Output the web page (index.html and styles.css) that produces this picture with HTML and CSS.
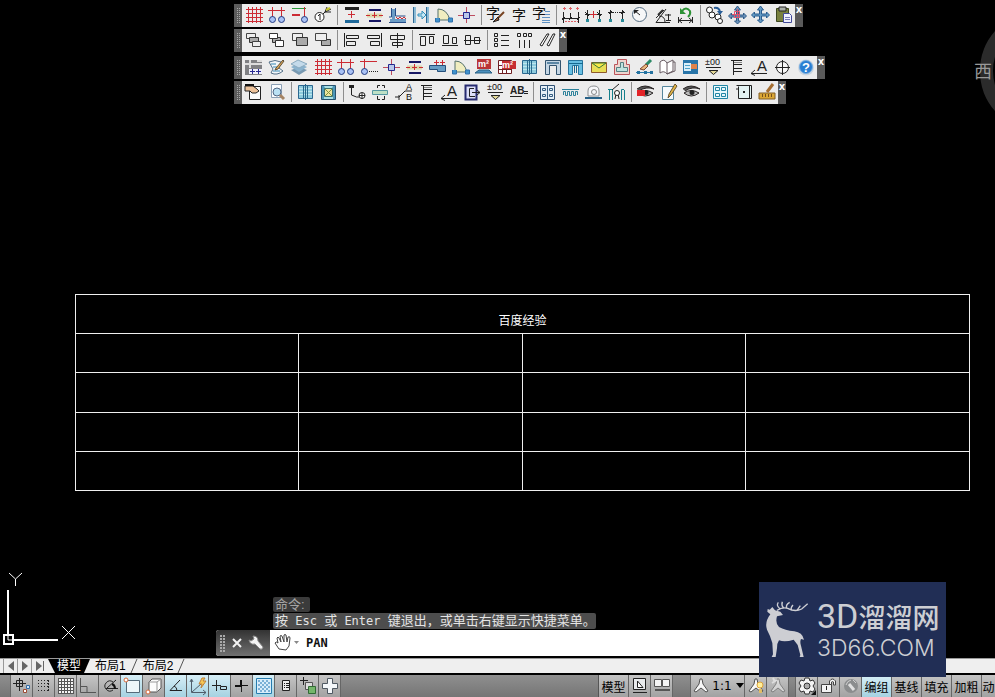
FILE: index.html
```html
<!DOCTYPE html>
<html lang="zh-CN">
<head>
<meta charset="utf-8">
<title>CAD</title>
<link rel="stylesheet" href="styles.css">
</head>
<body>
<svg class="sprite" aria-hidden="true">
<!-- drawing toolbar -->
<symbol id="grid" viewBox="0 0 19 19"><path d="M4.500 1v16M8.500 1v16M12.500 1v16M16.500 1v16M2 3.500h17M2 7.500h17M2 11.500h17M2 15.500h17" stroke="#cc2b34"/></symbol>
<symbol id="axes" viewBox="0 0 19 19"><path d="M5.500 1v10M14.500 1v10M1 4.500h17" class="red"/><circle cx="5.500" cy="13.500" r="3" class="ball"/><circle cx="14.500" cy="13.500" r="3" class="ball"/></symbol>
<symbol id="axis" viewBox="0 0 19 19"><path d="M2 2.500h14" stroke="#2a9a3a"/><path d="M14.500 1v10" class="red"/><path d="M2 9h8" class="red" stroke-width="2"/><circle cx="14.500" cy="13.500" r="3" class="ball"/></symbol>
<symbol id="number" viewBox="0 0 19 19"><path d="M9 9l3-3h6M12 6l2-5M12 6l6-3" class="ink"/><path d="M13 4l4-2" stroke="#c6c52c" stroke-width="2"/><circle cx="6.500" cy="11" r="4.500" fill="#fff" class="ink"/><path d="M5 10l2-2v6" class="ink"/></symbol>
<symbol id="level" viewBox="0 0 19 19"><path d="M3 2.500h14" class="ink" stroke-width="3"/><path d="M9.500 5v7M6 8.500h7" class="red"/><path d="M3 15.500h14" stroke="#1e699b" stroke-width="3"/></symbol>
<symbol id="offset" viewBox="0 0 19 19"><path d="M4 4h12M4 15h12" stroke="#171764" stroke-width="2"/><path d="M2 9.500h15" stroke="#ddd8aa" stroke-width="4"/><path d="M1 9.500h4M7 9.500h5M14 9.500h4M9.500 6v6" class="red"/></symbol>
<symbol id="wall" viewBox="0 0 19 19"><path d="M2 14.500h16M5.500 3v10" stroke="#6a9bc4" stroke-width="3"/><path d="M3.500 2v9H1M7.500 2v8h10M1 16.500h17" stroke="#254c88"/><path d="M8 11l2 2 2-2 2 2 2-2 2 2" class="red"/></symbol>
<symbol id="slide" viewBox="0 0 19 19"><path d="M3.500 1v16M16.500 1v16" stroke="#8cbbd5" stroke-width="3"/><path d="M2.500 1v16M15.500 1v16" stroke="#306a95"/><path d="M7 8h4V5l4 4-4 4v-3H7z" fill="#cae9f4" stroke="#3090bc"/></symbol>
<symbol id="arcdoor" viewBox="0 0 19 19"><path d="M4 14V3Q13 3 16 14z" fill="#f0edc0" stroke="#54716c"/><path d="M1.500 12v4h4v-4M14.500 12v4h4v-4z" fill="#4193cd" stroke="#3171ac"/></symbol>
<symbol id="cross" viewBox="0 0 19 19"><path d="M9.500 1v16M1 9.500h17" stroke="#bd4d60"/><path d="M6.500 6.500h6v6h-6z" fill="#bac9ea" stroke="#23278f" stroke-width="1"/></symbol>
<symbol id="textbrush" viewBox="0 0 19 19"><text x="0" y="12" class="zi">字</text><path d="M18 6l-6 6" stroke="#774322" stroke-width="2"/><path d="M12 11l-5 5 6-2z" fill="#96532d" class="ink"/></symbol>
<symbol id="text" viewBox="0 0 19 19"><text x="3" y="14" class="zi">字</text></symbol>
<symbol id="textlines" viewBox="0 0 19 19"><text x="0" y="12" class="zi">字</text><path d="M13 5.500h5M13 8.500h5M10 11.500h8M10 14.500h8M10 16.500h8" stroke="#5e91c3"/></symbol>
<symbol id="dim1" viewBox="0 0 19 19"><path d="M2.500 6v11M9.500 7v6M17.500 6v11M1 12.500h17M1 14l3-3M8 14l3-3M16 14l3-3" class="ink"/><path d="M3.500 1v3M9.500 1v3M16.500 1v3M8 2.500h3M15 2.500h3M2 2.500h3" stroke="#df6267"/><path d="M4 15.500h13" stroke="#df6267" stroke-dasharray="2 1"/></symbol>
<symbol id="dim2" viewBox="0 0 19 19"><path d="M3.500 4v9M15.500 4v9M1 8.500h17M1 6l4 4M13 6l4 4" class="ink"/><path d="M9.500 5v7M6 8.500h7" class="red"/><path d="M2 13h3v3H2zM14 13h3v3h-3z" fill="#298c9a"/></symbol>
<symbol id="dim3" viewBox="0 0 19 19"><path d="M3.500 4v9M15.500 4v9M1 6.500h5M13 6.500h5M2 8l3-3M14 8l3-3" class="ink"/><path d="M6 6.500h7" class="ink" stroke-dasharray="1 1"/><path d="M2 13h3v3H2zM14 13h3v3h-3z" fill="#298c9a"/></symbol>
<symbol id="radius" viewBox="0 0 19 19"><circle cx="9.500" cy="8.500" r="7" fill="#f6f7f8" stroke="#536c82"/><path d="M10 9L5 5" class="ink"/><path d="M4 4h5L4 8z" fill="#222"/></symbol>
<symbol id="angle" viewBox="0 0 19 19"><path d="M17 16.500H3L13 3M3 12l8-8M6 10q6 0 6 6M15.500 8v6M12 9h6M13 14.500h5" class="ink"/><path d="M5 9l5-5" stroke="#333" stroke-width="2"/></symbol>
<symbol id="update" viewBox="0 0 19 19"><path d="M2.500 11v6M16.500 11v6M2 14.500h15M6 12l-3 2.500 3 2.500M13 12l3 2.500-3 2.500" class="ink"/><path d="M6 5q4-5 8 0 1 3-2 6" stroke="#2c9235" stroke-width="2"/><path d="M4 2v6h6z" fill="#2c9235"/></symbol>
<symbol id="replace" viewBox="0 0 19 19"><circle cx="4.500" cy="4" r="3" fill="#fff" class="ink"/><circle cx="7" cy="9" r="3" fill="#fff" class="ink"/><circle cx="13" cy="11" r="3" fill="#fff" class="ink"/><circle cx="15" cy="15" r="2.500" fill="#fff" class="ink"/><path d="M9 2q5-1 6 4" stroke="#275c96" stroke-width="2"/><path d="M12 5h6l-3 4z" fill="#275c96"/></symbol>
<symbol id="movered" viewBox="0 0 19 19"><path d="M9.500 0l3 4h-2v5h5V7l3 3-3 3v-2h-5v4h2l-3 3-3-3h2v-4h-5v2l-3-3 3-3v2h5V4h-2z" fill="#6a91b9" stroke="#315c88"/><path d="M6.500 5.500h5v6h-5zM4 8.500h8M9.500 3v9" stroke="#e1526d"/></symbol>
<symbol id="move" viewBox="0 0 19 19"><path d="M9.500 0l3 4h-2v4h5V6l3 3-3 3v-2h-5v4h2l-3 3-3-3h2v-4h-5v2l-3-3 3-3v2h5V4h-2z" fill="#659bc4" stroke="#295c8f"/></symbol>
<symbol id="paste" viewBox="0 0 19 19"><path d="M2.500 2.500h12v13h-12z" fill="#78803e" stroke="#3c461f"/><path d="M5 1h7v4H5z" fill="#a9aea6" class="ink"/><path d="M9.500 7.500h6l2 2v7h-8z" fill="#eff1ff" stroke="#414998"/><path d="M11 11.500h5M11 13.500h5" stroke="#777bb7"/></symbol>
<!-- order and align -->
<symbol id="ord1" viewBox="0 0 19 19"><path d="M2.500 2.500h9v5h-9z" class="sheet"/><path d="M5.500 6.500h9v5h-9z" fill="#aaa" stroke="#333"/><path d="M8.500 10.500h8v5h-8z" class="sheet"/></symbol>
<symbol id="ord2" viewBox="0 0 19 19"><path d="M5.500 6.500h8v5h-8z" fill="#aaa" stroke="#333"/><path d="M2.500 2.500h8v5h-8zM8.500 9.500h8v6h-8z" fill="#fff" stroke="#333"/></symbol>
<symbol id="ord3" viewBox="0 0 19 19"><path d="M2.500 2.500h10v7h-10z" class="sheet"/><path d="M6.500 6.500h11v8h-11z" fill="#aaa" stroke="#333"/></symbol>
<symbol id="ord4" viewBox="0 0 19 19"><path d="M8.500 8.500h9v6h-9z" fill="#aaa" stroke="#333"/><path d="M2.500 2.500h11v7h-11z" class="sheet"/></symbol>
<symbol id="left" viewBox="0 0 19 19"><path d="M2.500 2v14M4.500 4.500h12v3h-12zM4.500 10.500h9v4h-9z" class="box"/></symbol>
<symbol id="right" viewBox="0 0 19 19"><path d="M16.500 2v14M2.500 4.500h12v3h-12zM5.500 10.500h9v4h-9z" class="box"/></symbol>
<symbol id="middle" viewBox="0 0 19 19"><path d="M9.500 2v15M2.500 4.500h14v4h-14zM4.500 11.500h10v3h-10z" class="box"/></symbol>
<symbol id="top" viewBox="0 0 19 19"><path d="M2 3.500h16M3.500 5.500h5v9h-5zM12.500 5.500h4v7h-4z" class="box"/></symbol>
<symbol id="bottom" viewBox="0 0 19 19"><path d="M2 14.500h16M3.500 4.500h5v8h-5zM12.500 6.500h4v6h-4z" class="box"/></symbol>
<symbol id="centre" viewBox="0 0 19 19"><path d="M1 9.500h17M2.500 4.500h5v9h-5zM11.500 6.500h5v6h-5z" class="box"/></symbol>
<symbol id="rows" viewBox="0 0 19 19"><path d="M2.500 2.500h3v3h-3zM2.500 7.500h3v3h-3zM2.500 12.500h3v3h-3zM9 4.500h8M9 9.500h8M9 14.500h8" class="box"/></symbol>
<symbol id="cols" viewBox="0 0 19 19"><path d="M2.500 2.500h3v3h-3zM8.500 2.500h3v3h-3zM13.500 2.500h3v3h-3zM4.500 9v8M9.500 9v8M14.500 9v8" class="box"/></symbol>
<symbol id="slants" viewBox="0 0 19 19"><path d="M2 14l7-11h2L4 15zM9 14l6-11h2l-6 12z" fill="#fff" stroke="#222"/></symbol>
<!-- architecture -->
<symbol id="settings" viewBox="0 0 19 19"><path d="M1 2h17v15H1z" fill="#808184"/><path d="M1 6h17M6 2v8M13 3h5" stroke="#ddd" stroke-width="2"/><path d="M5 11h13v5H5z" fill="#eff0fa"/><path d="M6 13.500h5M8.500 11v5M12 13.500h5M14.500 11v5" stroke="#282a91"/></symbol>
<symbol id="note" viewBox="0 0 19 19"><path d="M2 4q6-3 12 0l-2 6 4 3q-6 5-12 2l2-4z" fill="#f2f6f8" stroke="#536f88"/><path d="M4 6h5M6 9h4M6 13h7" stroke="#3488b4"/><path d="M16 2l-7 8-1 2 3-1 6-8z" fill="#e0a957" stroke="#615139"/></symbol>
<symbol id="layers" viewBox="0 0 19 19"><path d="M1 12l8-3 8 3-8 5z" fill="#7899b1"/><path d="M1 9l8-4 8 4-8 5z" fill="#8bb3ce"/><path d="M1 6l7-4 9 4-8 4z" fill="#c4daea" stroke="#8aaabf"/></symbol>
<symbol id="axisdots" viewBox="0 0 19 19"><path d="M5.500 1v10M1 3.500h17" class="red"/><circle cx="5.500" cy="13.500" r="3" class="ball"/><path d="M10 13.500h9" class="ink" stroke-dasharray="1 1"/></symbol>
<symbol id="beam" viewBox="0 0 19 19"><path d="M1.500 7.500h16v6h-8v-2h-8z" fill="#689dc4" stroke="#254f7b"/><path d="M8.500 2v5M14.500 2v5M6 4.500h5M12 4.500h5" stroke="#cc2b34"/></symbol>
<symbol id="area" viewBox="0 0 19 19"><path d="M3 1h14v10H3z" fill="#b93336"/><text x="4" y="9" class="m2">m²</text><path d="M1 15l4-3h10l3 3z" fill="#4c8fbc" stroke="#286184"/></symbol>
<symbol id="areagrid" viewBox="0 0 19 19"><path d="M1.500 2.500h13v13h-13zM1 7.500h13M1 11.500h13M5.500 2v14M9.500 2v14" fill="#fff" stroke="#702023"/><path d="M5 3h14v8H5z" fill="#c62e32"/><text x="5" y="10" class="m2">m²</text></symbol>
<symbol id="window" viewBox="0 0 19 19"><path d="M2.500 2.500h14v13h-14z" fill="#8ecbdd" stroke="#2b6890"/><path d="M3 5.500h13M3 8.500h13M3 11.500h13" stroke="#bde5ed"/><path d="M9.500 1v16M7.500 3v13M11.500 3v13" stroke="#28678b"/></symbol>
<symbol id="doorway" viewBox="0 0 19 19"><path d="M2.500 2.500h15v14h-4v-9h-7v9h-4z" fill="#c5d6e4" stroke="#33546f"/><path d="M4 5h12" stroke="#5b86a4" stroke-width="2"/></symbol>
<symbol id="gate" viewBox="0 0 19 19"><path d="M2.500 2.500h14v14h-4v-9h-6v9h-4z" fill="#68bfe2" stroke="#28759d"/><path d="M8.500 7v8M10.500 7v8M3 5.500h14" stroke="#176990"/></symbol>
<symbol id="mail" viewBox="0 0 19 19"><path d="M2.500 4.500h15v10h-15z" fill="#e8dd56" stroke="#8e5a2c"/><path d="M3 5l7 5 7-5z" fill="#f8e947" stroke="#38783b"/></symbol>
<symbol id="stamp" viewBox="0 0 19 19"><path d="M5.500 1.500h9v5h3v10h-15v-10h3z" fill="#eed5cf" stroke="#bb545a"/><path d="M8.500 4.500h3v5h4v4h-11v-4h4z" fill="#bfe3df" stroke="#577f82"/></symbol>
<symbol id="erase" viewBox="0 0 19 19"><path d="M1 14.500h17" stroke="#277cad"/><path d="M2 13h3v3H2zM9 13h3v3H9zM15 13h3v3h-3z" fill="#2573a0"/><path d="M16 2l-5 5" stroke="#2b8a66" stroke-width="3"/><path d="M11 6l-6 5 4 1 4-4z" fill="#e7b57a" stroke="#804531"/></symbol>
<symbol id="book" viewBox="0 0 19 19"><path d="M2 4q4-4 7 1v11q-3-4-7-1zM9 5l6-3v11l-6 3M15 4h2v9l-8 3" fill="#fff" stroke="#665a61"/></symbol>
<symbol id="panel" viewBox="0 0 19 19"><path d="M2 2h15v14H2z" fill="#2875a9"/><path d="M3 5h7v8H3z" fill="#d9eef8"/><path d="M4 7.500h5M4 10.500h5" stroke="#4ca1c9"/><path d="M10 6h6v5h-6z" fill="#e0834b"/></symbol>
<symbol id="elevation" viewBox="0 0 19 19"><text x="1" y="7" class="tiny">±00</text><path d="M2 9.500h15" class="ink"/><path d="M5 12.500h9l-4.500 4z" fill="#e4da9a" class="ink"/></symbol>
<symbol id="ladder" viewBox="0 0 19 19"><path d="M4 2.500h11M6.500 2v15M7 6.500h8M7 10.500h8M7 13.500h8" class="ink"/><path d="M7 4.500h8" stroke="#888"/></symbol>
<symbol id="letter" viewBox="0 0 19 19"><text x="7" y="13" class="bigA">A</text><path d="M17 15.500H1M5 12l-4 3.500 4 2" class="ink"/></symbol>
<symbol id="target" viewBox="0 0 19 19"><circle cx="9.500" cy="9.500" r="6" fill="#f7f7f7" class="ink"/><path d="M9.500 2v15M2 9.500h15" class="ink"/></symbol>
<symbol id="help" viewBox="0 0 19 19"><circle cx="10" cy="9.500" r="8" fill="#cbd5df"/><circle cx="10" cy="9" r="6.500" fill="#297ed2" stroke="#75ade2"/><text x="6" y="14" class="question">?</text></symbol>
<!-- annotation -->
<symbol id="hand" viewBox="0 0 19 19"><path d="M5.500 3.500h11v13h-11z" fill="#fafafa" class="ink"/><path d="M1 3h8l4 3 2 2-3 2H8L6 8H1z" fill="#edc29a" class="ink"/><path d="M1 2h9" stroke="#111" stroke-width="2"/></symbol>
<symbol id="preview" viewBox="0 0 19 19"><path d="M4.500 1.500h10v13h-10z" fill="#f9fcff" stroke="#8ca0b5"/><circle cx="10" cy="9" r="4" fill="#bae1f4" stroke="#526784"/><path d="M13 12l4 4" stroke="#a68463" stroke-width="3"/></symbol>
<symbol id="picture" viewBox="0 0 19 19"><path d="M2.500 2.500h14v14h-14z" fill="#4d97b8" stroke="#27516d"/><path d="M5 3h9l-2 4H7zM5 16v-4h9v4z" fill="#a8e0e5"/><path d="M5.500 5.500h8v8h-8z" fill="#eee6a0" stroke="#39716d"/><path d="M6 6l7 7M13 6l-7 7" stroke="#839640"/></symbol>
<symbol id="leader" viewBox="0 0 19 19"><path d="M3.500 3v9l5 2h3" class="ink"/><path d="M1 2h5v3H1z" fill="#222"/><circle cx="14" cy="12.500" r="3" fill="#fff" class="ink"/><path d="M11 12.500h6M14 10v6" class="ink"/></symbol>
<symbol id="section" viewBox="0 0 19 19"><path d="M1.500 7.500h15v4h-15z" fill="#bde0c5" stroke="#5597a1"/><path d="M6.500 5V2.500H9M11 2.500h2.500V5M6.500 13v3.500H9M11 16.500h2.500V13" class="ink"/></symbol>
<symbol id="ab" viewBox="0 0 19 19"><path d="M1 14h4l6-6h7M5 12v5" class="ink"/><text x="12" y="7" class="tiny">A</text><text x="12" y="17" class="tiny">B</text></symbol>
<symbol id="page" viewBox="0 0 19 19"><path d="M2.500 2.500h11v14h-11z" fill="#dddff8" stroke="#272b6f" stroke-width="2"/><path d="M11 5.500H6.500v8H12M9 9.500h8M14 7l3 2.500-3 2.500" class="ink"/></symbol>
<symbol id="abtext" viewBox="0 0 19 19"><text x="1" y="11" class="abt">AB</text><path d="M1 13.500h12M15 10.500h4M15 8.500h4" class="ink"/></symbol>
<symbol id="facade" viewBox="0 0 19 19"><path d="M2.500 2.500h14v14h-14z" fill="#e6f0f7" stroke="#2f5072"/><path d="M4.500 5.500h3v2h-3zM11.500 5.500h3v2h-3zM4.500 11.500h3v2h-3zM11.500 11.500h3v2h-3zM9.500 3v13" stroke="#355e82"/></symbol>
<symbol id="wave" viewBox="0 0 19 19"><path d="M1 6.500h17M2.500 12V8.500h2v4h2v-4h2v4h2v-4h2v4h2v-4h2V12" stroke="#2a8099"/></symbol>
<symbol id="arch" viewBox="0 0 19 19"><path d="M4 13V8q0-5 6-5 5 0 5 5v5z" fill="#f7f8fa" stroke="#8c8f92"/><circle cx="10" cy="9" r="2.500" stroke="#888"/><path d="M1 15h17" stroke="#276187" stroke-width="2"/></symbol>
<symbol id="house" viewBox="0 0 19 19"><path d="M1 6.500h4.500V17M17 6.500h-2.500V17M2.500 7v10M17.500 7v10" stroke="#16808c"/><path d="M5 7l7-6M8 16l1-5M12 16l-1-5" class="ink"/><circle cx="10" cy="10" r="2.500" fill="#fff" class="ink"/></symbol>
<symbol id="eye" viewBox="0 0 19 19"><path d="M1 6q8-6 17 0-8-3-15 2" fill="#555" stroke="#272323"/><path d="M2 10q7-5 15 0-8 6-15 0" fill="#bbb" stroke="#272323"/><circle cx="10" cy="9.500" r="2.500" fill="#222"/></symbol>
<symbol id="redeye" viewBox="0 0 19 19"><use href="#eye"/><path d="M1 7h8v6H1z" fill="#e32428"/></symbol>
<symbol id="edit" viewBox="0 0 19 19"><path d="M3.500 3.500h11v13h-11z" fill="#f5fafc" stroke="#55869c"/><path d="M16 1l-6 10-1 4 3-3 6-9z" fill="#e1b748" stroke="#685230"/></symbol>
<symbol id="tiles" viewBox="0 0 19 19"><path d="M2.500 2.500h14v13h-14z" fill="#e9f8fc" stroke="#2386a4"/><path d="M4.500 4.500h4v3h-4zM10.500 4.500h4v3h-4zM4.500 10.500h4v3h-4zM10.500 10.500h4v3h-4z" stroke="#2386a4"/></symbol>
<symbol id="frame" viewBox="0 0 19 19"><path d="M2.500 2.500h15v13h-13v-12M2 6h2M15.500 3v13" fill="#e4f3f3" class="ink"/><path d="M9 8h2v2H9z" fill="#222"/></symbol>
<symbol id="measure" viewBox="0 0 19 19"><path d="M2 10h16v6H2z" fill="#dba735" stroke="#825e26"/><path d="M5.500 11v3M8.500 11v3M11.500 11v3M14.500 11v3" stroke="#76501c"/><path d="M16 1l-6 8" stroke="#a56e32" stroke-width="3"/></symbol>
<!-- status bar -->
<symbol id="s-infer" viewBox="0 0 20 20"><path d="M7.500 2v13M1 7.500h13M4.500 4.500h6v6h-6z" class="dk"/><path d="M11.500 13.500h3v3h-3z" fill="#fff" stroke="#9e4a32"/><path d="M14.500 9.500h3v3h-3z" fill="#d5e5f8" stroke="#336da5"/></symbol>
<symbol id="s-snap" viewBox="0 0 20 20"><path d="M4 4.500h10M4 7.500h10M4 10.500h10M4 14.500h10" class="dk" stroke-dasharray="1 2"/><path d="M14.500 4v11" class="dk" stroke-dasharray="2 1"/></symbol>
<symbol id="s-grid" viewBox="0 0 20 20"><path d="M2 2h16v16H2z" fill="#f5f5f5"/><path d="M2.500 2v16M5.500 2v16M8.500 2v16M11.500 2v16M14.500 2v16M17.500 2v16M2 2.500h16M2 5.500h16M2 8.500h16M2 11.500h16M2 14.500h16M2 17.500h16" stroke="#555"/></symbol>
<symbol id="s-ortho" viewBox="0 0 20 20"><path d="M2.500 2v14.500H18M3 10.500h6v6" stroke="#555"/></symbol>
<symbol id="s-polar" viewBox="0 0 20 20"><path d="M13 6a5 5 0 1 0 0 8M6 12.500h12M7 12l9-8" class="dk"/><path d="M12 8q3 1 3 5" stroke="#111" stroke-width="2"/></symbol>
<symbol id="s-osnap" viewBox="0 0 20 20"><path d="M4.500 4.500h13v12h-13z" fill="#edf7fa" stroke="#546b7a"/><circle cx="4" cy="4" r="2" class="orange"/></symbol>
<symbol id="s-cube" viewBox="0 0 20 20"><path d="M5 6l3-3h9v9l-4 4H5z" fill="#fcfcfc" stroke="#555"/><path d="M5 6h8v10M13 6l4-3" stroke="#999"/><circle cx="4" cy="16" r="2" class="orange"/></symbol>
<symbol id="s-track" viewBox="0 0 20 20"><path d="M14 4L4 14.500h12M8 10q3 1 3 5" class="dk"/></symbol>
<symbol id="s-ucs" viewBox="0 0 20 20"><path d="M3.500 4v12.500H18M4 16l9-8M2 6l1.500-3L5 6M15 14l3 2.500-3 2.500" stroke="#4f5d6a"/><path d="M14 2l-3 6h3l-1 4 5-7h-3l2-3z" fill="#f5c756" stroke="#c08139"/></symbol>
<symbol id="s-dyn" viewBox="0 0 20 20"><path d="M6.500 4v11M2 9.500h9M10.500 10.500h6v3h-6z" class="dk"/></symbol>
<symbol id="s-plus" viewBox="0 0 20 20"><path d="M9.500 4v12" class="dk"/><path d="M3 9.500h13" stroke="#111" stroke-width="1"/><path d="M9 4v6M3 10h7" stroke="#111" stroke-width="2"/></symbol>
<symbol id="s-trans" viewBox="0 0 20 20"><path d="M2.500 2.500h15v15h-15z" fill="#d8edfa" stroke="#267caf"/><path d="M4 5h12M4 9h12M4 13h12" stroke="#7bb0d6" stroke-width="2" stroke-dasharray="2 2"/><path d="M6 7h10M6 11h10M6 15h10" stroke="#7bb0d6" stroke-width="2" stroke-dasharray="2 2"/></symbol>
<symbol id="s-list" viewBox="0 0 20 20"><path d="M6.500 4.500h7v10h-7z" fill="#eee" class="dk"/><path d="M8 7.500h1M8 9.500h1M8 11.500h1M10 7.500h3M10 9.500h3M10 11.500h3" class="dk"/></symbol>
<symbol id="s-select" viewBox="0 0 20 20"><path d="M5.500 1v8M2 4.500h8" class="dk"/><path d="M7.500 6.500h7v7h-7z" fill="#ddd" stroke="#555"/><path d="M10.500 10.500h7v7h-7z" fill="#75b66b" stroke="#326b35"/></symbol>
<symbol id="s-add" viewBox="0 0 20 20"><path d="M7.500 2.500h5v5h5v5h-5v5h-5v-5h-5v-5h5z" fill="#f3f7fa" stroke="#4e5963"/></symbol>
<symbol id="s-model" viewBox="0 0 20 20"><path d="M3.500 2.500h12v11h-12zM3 16.500h14" fill="#e8eaec" class="dk"/><path d="M7.500 5v6.500H13z" fill="#fff" class="dk"/></symbol>
<symbol id="s-pages" viewBox="0 0 20 20"><path d="M2.500 3.500h7v7h-7zM10.500 3.500h7v7h-7z" fill="#f4f4f4" stroke="#555"/><path d="M3 14h15" stroke="#555" stroke-width="2"/></symbol>
<symbol id="s-annot" viewBox="0 0 20 20"><path d="M9 3h2l1 5 5 7-2 1-5-4-5 4-2-1 5-7z" fill="#f7f7f7" stroke="#525252"/></symbol>
<symbol id="s-annotsun" viewBox="0 0 20 20"><use href="#s-annot"/><circle cx="14" cy="9" r="3" fill="#fff09b" stroke="#dda33b"/><path d="M13 13h3v4h-3z" fill="#e3bd64"/></symbol>
<symbol id="s-annotflash" viewBox="0 0 20 20"><g opacity=".5"><use href="#s-annot"/><path d="M5 2l2 4M9 4L4 7" stroke="#fff" stroke-width="2"/></g></symbol>
<symbol id="s-gear" viewBox="0 0 20 20"><path d="M8 2h4l1 3 3-1 2 3-2 3 2 3-2 3-3-1-1 3H8l-1-3-3 1-2-3 2-3-2-3 2-3 3 1z" fill="#f4f4f4" stroke="#343434"/><circle cx="10" cy="10" r="3" fill="#aaa" stroke="#333"/><path d="M19 14v5h-5z" fill="#111"/></symbol>
<symbol id="s-lock" viewBox="0 0 20 20"><path d="M10.500 9V5q3-4 6 0v4h-2V6q-1-1-2 0v3z" fill="#f3f3f3" stroke="#444"/><path d="M2.500 8.500h10v8h-10z" fill="#f3f3f3" stroke="#444"/><path d="M7.500 10v4" class="dk"/></symbol>
<symbol id="s-gauge" viewBox="0 0 20 20"><circle cx="10" cy="10" r="7" fill="#8b8d8e"/><path d="M8 8l5 6" stroke="#e1e1e1" stroke-width="3"/><path d="M5 9q1-4 5-5M12 4l3 3" stroke="#d0d0d0"/></symbol>
</svg>

<main class="app">
  <section class="canvas">
    <div class="toolbars">
      <div class="toolbar" role="toolbar" aria-label="轴网">
        <button aria-label="轴网"><svg><use href="#grid"/></svg></button><button aria-label="双轴"><svg><use href="#axes"/></svg></button><button aria-label="单轴"><svg><use href="#axis"/></svg></button><button aria-label="编号"><svg><use href="#number"/></svg></button><i></i>
        <button aria-label="标高"><svg><use href="#level"/></svg></button><button aria-label="偏移"><svg><use href="#offset"/></svg></button><button aria-label="墙体"><svg><use href="#wall"/></svg></button><button aria-label="推拉"><svg><use href="#slide"/></svg></button><button aria-label="门"><svg><use href="#arcdoor"/></svg></button><button aria-label="柱"><svg><use href="#cross"/></svg></button><i></i>
        <button aria-label="文字样式"><svg><use href="#textbrush"/></svg></button><button aria-label="单行文字"><svg><use href="#text"/></svg></button><button aria-label="多行文字"><svg><use href="#textlines"/></svg></button><i></i>
        <button aria-label="门窗标注"><svg><use href="#dim1"/></svg></button><button aria-label="墙厚标注"><svg><use href="#dim2"/></svg></button><button aria-label="逐点标注"><svg><use href="#dim3"/></svg></button><button aria-label="半径"><svg><use href="#radius"/></svg></button><button aria-label="角度"><svg><use href="#angle"/></svg></button><button aria-label="更新"><svg><use href="#update"/></svg></button><i></i>
        <button aria-label="替换"><svg><use href="#replace"/></svg></button><button aria-label="拖动"><svg><use href="#movered"/></svg></button><button aria-label="移动"><svg><use href="#move"/></svg></button><button aria-label="粘贴"><svg><use href="#paste"/></svg></button>
        <button class="close" aria-label="关闭">x</button>
      </div>
      <div class="toolbar" role="toolbar" aria-label="对齐">
        <button aria-label="前置"><svg><use href="#ord1"/></svg></button><button aria-label="后置"><svg><use href="#ord2"/></svg></button><button aria-label="上移"><svg><use href="#ord3"/></svg></button><button aria-label="下移"><svg><use href="#ord4"/></svg></button><i></i>
        <button aria-label="左对齐"><svg><use href="#left"/></svg></button><button aria-label="右对齐"><svg><use href="#right"/></svg></button><button aria-label="居中"><svg><use href="#middle"/></svg></button><i></i>
        <button aria-label="顶对齐"><svg><use href="#top"/></svg></button><button aria-label="底对齐"><svg><use href="#bottom"/></svg></button><button aria-label="中对齐"><svg><use href="#centre"/></svg></button><i></i>
        <button aria-label="行距"><svg><use href="#rows"/></svg></button><button aria-label="列距"><svg><use href="#cols"/></svg></button><button aria-label="平行"><svg><use href="#slants"/></svg></button>
        <button class="close" aria-label="关闭">x</button>
      </div>
      <div class="toolbar second" role="toolbar" aria-label="建筑">
        <button aria-label="设置"><svg><use href="#settings"/></svg></button><button aria-label="说明"><svg><use href="#note"/></svg></button><button aria-label="图层"><svg><use href="#layers"/></svg></button><button aria-label="轴网"><svg><use href="#grid"/></svg></button><button aria-label="双轴"><svg><use href="#axes"/></svg></button><button aria-label="添加轴线"><svg><use href="#axisdots"/></svg></button><button aria-label="柱"><svg><use href="#cross"/></svg></button><button aria-label="偏移"><svg><use href="#offset"/></svg></button><button aria-label="梁"><svg><use href="#beam"/></svg></button><button aria-label="门"><svg><use href="#arcdoor"/></svg></button><button aria-label="面积"><svg><use href="#area"/></svg></button><button aria-label="面积表"><svg><use href="#areagrid"/></svg></button><button aria-label="窗"><svg><use href="#window"/></svg></button><button aria-label="门洞"><svg><use href="#doorway"/></svg></button><button aria-label="双门"><svg><use href="#gate"/></svg></button><button aria-label="屋顶"><svg><use href="#mail"/></svg></button><button aria-label="轮廓"><svg><use href="#stamp"/></svg></button><button aria-label="清理"><svg><use href="#erase"/></svg></button><button aria-label="图集"><svg><use href="#book"/></svg></button><button aria-label="面板"><svg><use href="#panel"/></svg></button><button aria-label="标高标注"><svg><use href="#elevation"/></svg></button><button aria-label="做法"><svg><use href="#ladder"/></svg></button><button aria-label="引出"><svg><use href="#letter"/></svg></button><button aria-label="指北针"><svg><use href="#target"/></svg></button><button aria-label="帮助"><svg><use href="#help"/></svg></button>
        <button class="close" aria-label="关闭">x</button>
      </div>
      <div class="toolbar" role="toolbar" aria-label="标注">
        <button aria-label="特性"><svg><use href="#hand"/></svg></button><button aria-label="预览"><svg><use href="#preview"/></svg></button><i></i>
        <button aria-label="窗"><svg><use href="#window"/></svg></button><button aria-label="图框"><svg><use href="#picture"/></svg></button><i></i>
        <button aria-label="引线"><svg><use href="#leader"/></svg></button><button aria-label="剖切"><svg><use href="#section"/></svg></button><button aria-label="引注"><svg><use href="#ab"/></svg></button><button aria-label="做法"><svg><use href="#ladder"/></svg></button><button aria-label="引出"><svg><use href="#letter"/></svg></button><button aria-label="页面"><svg><use href="#page"/></svg></button><button aria-label="标高标注"><svg><use href="#elevation"/></svg></button><button aria-label="图名"><svg><use href="#abtext"/></svg></button><i></i>
        <button aria-label="立面"><svg><use href="#facade"/></svg></button><button aria-label="剖面"><svg><use href="#wave"/></svg></button><button aria-label="洞口"><svg><use href="#arch"/></svg></button><button aria-label="房屋"><svg><use href="#house"/></svg></button><i></i>
        <button aria-label="局部隐藏"><svg><use href="#redeye"/></svg></button><button aria-label="编辑"><svg><use href="#edit"/></svg></button><button aria-label="显示"><svg><use href="#eye"/></svg></button><i></i>
        <button aria-label="布图"><svg><use href="#tiles"/></svg></button><button aria-label="图框"><svg><use href="#frame"/></svg></button><button aria-label="测量"><svg><use href="#measure"/></svg></button>
        <button class="close" aria-label="关闭">x</button>
      </div>
    </div>
    <div class="compass"><span>西</span></div>

    <table class="drawing">
      <tbody>
        <tr><td colspan="4" class="title">百度经验</td></tr>
        <tr><td></td><td></td><td></td><td></td></tr>
        <tr><td></td><td></td><td></td><td></td></tr>
        <tr><td></td><td></td><td></td><td></td></tr>
        <tr><td></td><td></td><td></td><td></td></tr>
      </tbody>
    </table>

    <svg class="ucs" viewBox="0 0 80 74" aria-hidden="true">
      <path d="M8 18v45M13 68h45" stroke-width="2"/><path d="M4 63h9v9H4z" stroke-width="2"/><path d="M8 68h5M8 63v5" stroke-width="1"/>
      <path d="M9 1l6.500 6L22 1M15.500 7v7M62 54l13 13M75 54L62 67"/>
    </svg>

    <div class="console">
      <p class="log dim">命令:</p>
      <p class="log">按<span class="latin"> Esc </span>或<span class="latin"> Enter </span>键退出，或单击右键显示快捷菜单。</p>
      <div class="prompt">
        <div class="handle">
          <svg class="dots" viewBox="0 0 6 18" aria-hidden="true"><path d="M1 1v17M4 1v17" stroke="#aaa" stroke-width="2" stroke-dasharray="2 1"/></svg>
          <button aria-label="关闭"><svg viewBox="0 0 10 10"><path d="M1 1l8 8M9 1L1 9" stroke="#f2f2f2" stroke-width="2"/></svg></button>
          <button aria-label="自定义"><svg class="wrench" viewBox="0 0 16 16"><path d="M1 5l2 1 3-2-1-3q5 0 5 5l5 6q0 3-3 2L7 9Q2 10 1 5z" fill="#f4f4f4" stroke="#888"/></svg></button>
        </div>
        <svg class="pan" viewBox="0 0 26 18" aria-hidden="true"><path d="M5 15L1 9q1-2 3 0L3 4q1-2 2 0l2 4-1-6q1-1 2 0l2 6V1q1-1 2 0l1 7 1-5q2-1 2 1l-1 8-3 4z" fill="#fff" stroke="#444"/><path d="M20 7h5l-2.500 3z" fill="#888"/></svg>
        <input aria-label="命令" value="PAN">
      </div>
    </div>
  </section>

  <nav class="tabs" aria-label="布局">
    <button class="step" aria-label="首个"><svg viewBox="0 0 10 10"><path d="M0 0v10" stroke="#666" stroke-width="3"/></svg></button>
    <button class="step wide" aria-label="上一个"><svg viewBox="0 0 10 10"><path d="M8 0v10L2 5z" fill="#666"/></svg></button>
    <button class="step wide" aria-label="下一个"><svg viewBox="0 0 10 10"><path d="M2 0v10l6-5z" fill="#666"/></svg></button>
    <button class="step wide last" aria-label="末个"><svg viewBox="0 0 10 10"><path d="M1 0v10l6-5z" fill="#666"/><path d="M8.500 0v10" stroke="#666"/></svg></button>
    <button class="tab active">模型</button>
    <button class="tab">布局1</button><svg class="slash" viewBox="0 0 8 14" aria-hidden="true"><path d="M7 0L1 14"/></svg>
    <button class="tab">布局2</button><svg class="slash" viewBox="0 0 8 14" aria-hidden="true"><path d="M7 0L1 14"/></svg>
  </nav>

  <footer class="status">
    <span class="stub"></span>
    <button aria-label="推断约束"><svg><use href="#s-infer"/></svg></button><button aria-label="捕捉"><svg><use href="#s-snap"/></svg></button><button aria-label="栅格"><svg><use href="#s-grid"/></svg></button><button aria-label="正交"><svg><use href="#s-ortho"/></svg></button><button aria-label="极轴"><svg><use href="#s-polar"/></svg></button><button class="on" aria-label="对象捕捉"><svg><use href="#s-osnap"/></svg></button><button aria-label="三维捕捉"><svg><use href="#s-cube"/></svg></button><button class="on" aria-label="对象追踪"><svg><use href="#s-track"/></svg></button><button class="on" aria-label="动态UCS"><svg><use href="#s-ucs"/></svg></button><button class="on" aria-label="动态输入"><svg><use href="#s-dyn"/></svg></button><button aria-label="线宽"><svg><use href="#s-plus"/></svg></button><button class="on" aria-label="透明度"><svg><use href="#s-trans"/></svg></button><button aria-label="快捷特性"><svg><use href="#s-list"/></svg></button><button aria-label="选择循环"><svg><use href="#s-select"/></svg></button><button aria-label="注释监视"><svg><use href="#s-add"/></svg></button>
    <span class="fill"></span>
    <button class="word">模型</button><button aria-label="布局"><svg><use href="#s-model"/></svg></button><button aria-label="快速查看"><svg><use href="#s-pages"/></svg></button>
    <span class="gap"></span>
    <button class="scale"><svg><use href="#s-annot"/></svg>1:1<svg class="caret" viewBox="0 0 8 6"><path d="M0 0h8L4 5z"/></svg></button><button aria-label="注释可见性"><svg><use href="#s-annotsun"/></svg></button><button aria-label="自动缩放"><svg><use href="#s-annotflash"/></svg></button>
    <span class="gap small"></span>
    <button aria-label="工作空间"><svg><use href="#s-gear"/></svg></button><button aria-label="锁定"><svg><use href="#s-lock"/></svg></button><button aria-label="硬件加速"><svg><use href="#s-gauge"/></svg></button>
    <button class="word on">编组</button><button class="word">基线</button><button class="word">填充</button><button class="word">加粗</button><button class="word">动</button>
  </footer>

  <aside class="brand">
    <svg viewBox="30 64 135 174" aria-hidden="true"><path d="M38 88L44 90 52 82 60 92 76 96 84 106 66 110Q60 130 72 142 90 152 118 155 142 158 147 180L138 178Q134 186 138 198L146 232H134L136 226 128 196 116 180Q90 188 72 182 66 190 66 206L62 232H50L54 224 52 190Q46 168 36 150 28 128 46 104L37 96z" fill="#cdced3"/><path d="M66 92Q84 82 98 86 120 98 140 88L158 72M76 88Q62 78 70 68M86 86Q78 76 82 66M96 87Q90 76 104 68M110 91Q106 84 114 76M126 92L136 78" fill="none" stroke="#cdced3" stroke-width="4"/></svg>
    <div><strong><span class="big">3D</span>溜溜网</strong><span class="domain">3D66.COM</span></div>
  </aside>
</main>
</body>
</html>
```
FILE: styles.css
```css
* { box-sizing: border-box; }
body {
  margin: 0;
  background: #000;
  font-family: "Liberation Sans", "Noto Sans CJK SC", sans-serif;
  font-size: 12px;
}
button {
  border: 0;
  padding: 0;
  margin: 0;
  background: none;
  font: inherit;
  color: inherit;
}
svg { display: block; }
.sprite { display: none; }
symbol { fill: none; }

.app {
  position: relative;
  display: flex;
  flex-direction: column;
  min-height: 100vh;
  overflow: hidden;
}
.canvas {
  position: relative;
  flex: 1;
  display: flex;
  flex-direction: column;
  padding-top: 4px;
}

/* floating toolbars */
.toolbars {
  display: flex;
  flex-direction: column;
  align-items: flex-start;
  gap: 2px;
  margin-left: 234px;
}
.toolbar {
  display: flex;
  height: 23px;
  padding-left: 8px;
  background:
    repeating-linear-gradient(#aaa 0 1px, transparent 1px 2px) 3px 4px / 1px 15px no-repeat,
    repeating-linear-gradient(#aaa 0 1px, transparent 1px 2px) 5px 4px / 1px 15px no-repeat,
    linear-gradient(90deg, #5c5c5c 8px, #ececec 8px);
}
.toolbar.second { margin-top: 2px; }
.toolbar button {
  display: flex;
  flex: none;
  align-items: center;
  justify-content: center;
  width: 23px;
}
.toolbar svg { width: 19px; height: 19px; }
.toolbar i {
  flex: none;
  width: 1px;
  height: 20px;
  margin: 1px 2px 0 3px;
  background: #8e8e8e;
}
.toolbar .close {
  width: 8px;
  align-items: flex-start;
  background: #5a5a5a;
  color: #fff;
  font: bold 10px/12px "DejaVu Sans", sans-serif;
}

/* icon strokes */
.red { stroke: #cc2b34; }
.ink, .dk, .box { stroke: #222; }
.ball { fill: #a9c2f5; stroke: #223a82; }
.sheet { fill: #eee; stroke: #444; }
.orange { fill: #fff; stroke: #d96b3b; }
.zi { font: 14px "Noto Sans CJK SC", sans-serif; fill: #111; }
.m2 { font: bold 9px "Liberation Sans", sans-serif; fill: #fff; }
.tiny { font: 9px "Liberation Sans", sans-serif; fill: #111; }
.bigA { font: 15px "Liberation Sans", sans-serif; fill: #222; }
.abt { font: bold 10px "Liberation Sans", sans-serif; fill: #222; }
.question { font: bold 13px "Liberation Sans", sans-serif; fill: #fff; }

.compass {
  position: absolute;
  top: 10px;
  right: -107px;
  width: 122px;
  height: 122px;
  border: 13px solid #2b2b2b;
  border-radius: 50%;
}
.compass span {
  position: absolute;
  left: -19px;
  top: 36px;
  color: #999;
  font-size: 18px;
  line-height: 27px;
}

/* drawn table */
.drawing {
  height: 197px;
  margin: 190px 25px 0 75px;
  border-collapse: collapse;
  table-layout: fixed;
}
.drawing td { height: 39px; padding: 0; border: 1px solid #f0f0f0; }
.drawing .title {
  padding-top: 14px;
  color: #fff;
  font-family: "Liberation Serif", "Noto Sans CJK SC", serif;
  line-height: 20px;
  text-align: center;
}

.ucs {
  position: absolute;
  left: 0;
  bottom: 12px;
  width: 80px;
  height: 74px;
  fill: none;
  stroke: #fff;
}

/* command line */
.console {
  display: flex;
  flex-direction: column;
  align-items: flex-start;
  margin: auto 50px 2px 216px;
}
.log {
  margin: 0 0 1px 57px;
  padding: 0 0 0 2px;
  border-radius: 2px;
  background: #4d4d4d;
  color: #e4e4e4;
  font-size: 13px;
  line-height: 15px;
  white-space: pre;
}
.log.dim { padding-right: 5px; background: #3b3b3b; color: #a5a5a5; }
.latin { font-family: "DejaVu Sans Mono", monospace; font-size: 12px; }
.prompt {
  display: flex;
  align-items: center;
  align-self: stretch;
  height: 26px;
  border-radius: 3px 0 0 3px;
  background: #fff;
}
.handle {
  display: flex;
  align-items: center;
  align-self: stretch;
  gap: 6px;
  width: 54px;
  padding-left: 4px;
  border-radius: 3px 0 0 3px;
  background: linear-gradient(#333, #707070);
}
.handle .dots { width: 6px; height: 18px; }
.handle button svg { width: 10px; height: 10px; }
.handle button .wrench { width: 16px; height: 16px; }
.pan { width: 26px; height: 18px; margin-left: 4px; }
.prompt input {
  flex: 1;
  min-width: 0;
  margin-left: 6px;
  padding: 0;
  border: 0;
  outline: 0;
  background: none;
  color: #111;
  font: bold 12px "DejaVu Sans Mono", monospace;
}

/* layout tabs */
.tabs {
  display: flex;
  height: 15px;
  background: #efefef;
  border-top: 1px solid #999;
}
.step {
  display: flex;
  align-items: center;
  justify-content: center;
  width: 4px;
  border-right: 1px solid #999;
}
.step.wide { width: 14px; }
.step.last { width: 16px; border: 0; }
.step svg { flex: none; width: 10px; height: 10px; }
.tab { padding: 0 4px 0 5px; line-height: 14px; color: #000; }
.tab.active {
  padding: 0 9px;
  background: #000;
  color: #fff;
  clip-path: polygon(0 0, 100% 0, calc(100% - 6px) 100%, 7px 100%);
}
.slash { width: 8px; height: 14px; fill: none; stroke: #555; }

/* status bar */
.status {
  display: flex;
  height: 24px;
  border-top: 2px solid #000;
  background: linear-gradient(#8f8f8f, #757575);
  overflow: hidden;
}
.status button, .stub, .gap {
  display: flex;
  flex: none;
  align-items: center;
  justify-content: center;
  width: 22px;
  border-right: 1px solid #666;
  background: linear-gradient(#c5c5c5, #a2a2a2);
  color: #000;
}
.status svg { flex: none; width: 20px; height: 20px; }
.status button.on { background: linear-gradient(#d7eff7, #a5d2e1); }
.status .word { width: 30px; }
.stub, .gap { background: none; }
.stub { width: 11px; }
.fill { flex: 1; border-right: 1px solid #555; }
.gap { width: 18px; }
.gap.small { width: 7px; }
.status .scale { width: 54px; gap: 1px; font-family: "DejaVu Sans", sans-serif; }
.status .caret { width: 8px; height: 6px; margin-left: 3px; }
.status .word:last-child { width: 13px; border: 0; }

/* brand plate */
.brand {
  position: absolute;
  right: 49px;
  bottom: 20px;
  display: flex;
  align-items: center;
  gap: 7px;
  width: 187px;
  height: 95px;
  padding-left: 6px;
  background: #212e55;
  color: #cdced3;
  white-space: nowrap;
}
.brand svg { width: 45px; height: 58px; }
.brand strong {
  display: block;
  font: 500 27px/34px Roboto, "Noto Sans CJK SC", sans-serif;
}
.brand .big { font-size: 34px; font-weight: 400; }
.brand .domain {
  display: block;
  font: 300 23px/24px Inter, sans-serif;
}
```
